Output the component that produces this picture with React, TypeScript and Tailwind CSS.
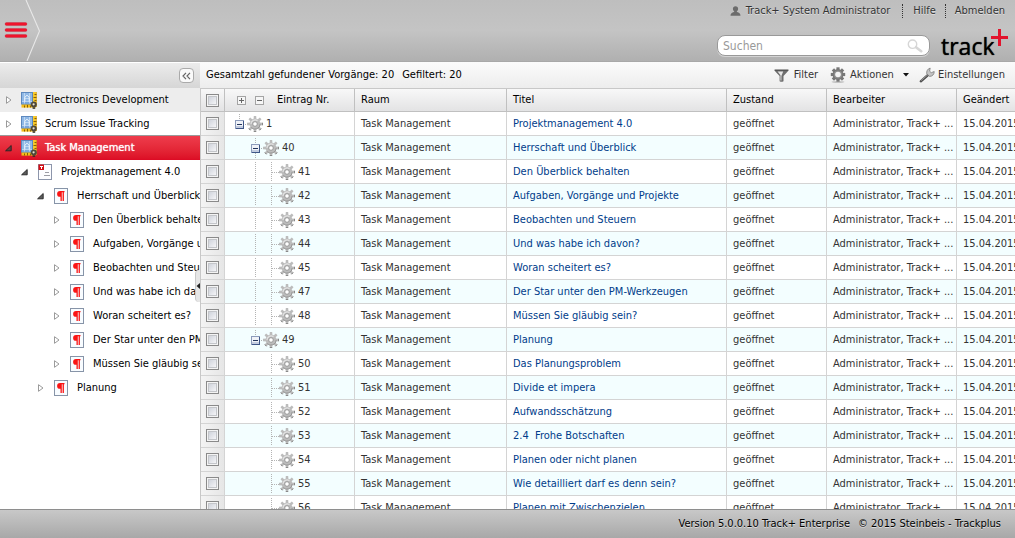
import React from "react";

type TreeNode = {
  label: string;
  depth: number;
  icon: "project" | "document" | "paragraph";
  open?: boolean;
  selected?: boolean;
  hovered?: boolean;
};

const treeNodes: TreeNode[] = [
  { label: "Electronics Development", depth: 0, icon: "project", hovered: true },
  { label: "Scrum Issue Tracking", depth: 0, icon: "project" },
  { label: "Task Management", depth: 0, icon: "project", open: true, selected: true },
  { label: "Projektmanagement 4.0", depth: 1, icon: "document", open: true },
  { label: "Herrschaft und Überblick", depth: 2, icon: "paragraph", open: true },
  { label: "Den Überblick behalten", depth: 3, icon: "paragraph" },
  { label: "Aufgaben, Vorgänge und Projekte", depth: 3, icon: "paragraph" },
  { label: "Beobachten und Steuern", depth: 3, icon: "paragraph" },
  { label: "Und was habe ich davon?", depth: 3, icon: "paragraph" },
  { label: "Woran scheitert es?", depth: 3, icon: "paragraph" },
  { label: "Der Star unter den PM-Werkzeugen", depth: 3, icon: "paragraph" },
  { label: "Müssen Sie gläubig sein?", depth: 3, icon: "paragraph" },
  { label: "Planung", depth: 2, icon: "paragraph" },
];

type GuideKind = "blank" | "line" | "elbow" | "box" | "firstBox" | "lastBox";

type Item = { id: number; title: string; guides: GuideKind[] };

const underFirst: GuideKind[] = ["blank", "line", "elbow"];
const underLast: GuideKind[] = ["blank", "blank", "elbow"];

const items: Item[] = [
  { id: 1, title: "Projektmanagement 4.0", guides: ["firstBox"] },
  { id: 40, title: "Herrschaft und Überblick", guides: ["blank", "box"] },
  { id: 41, title: "Den Überblick behalten", guides: underFirst },
  { id: 42, title: "Aufgaben, Vorgänge und Projekte", guides: underFirst },
  { id: 43, title: "Beobachten und Steuern", guides: underFirst },
  { id: 44, title: "Und was habe ich davon?", guides: underFirst },
  { id: 45, title: "Woran scheitert es?", guides: underFirst },
  { id: 47, title: "Der Star unter den PM-Werkzeugen", guides: underFirst },
  { id: 48, title: "Müssen Sie gläubig sein?", guides: underFirst },
  { id: 49, title: "Planung", guides: ["blank", "lastBox"] },
  { id: 50, title: "Das Planungsproblem", guides: underLast },
  { id: 51, title: "Divide et impera", guides: underLast },
  { id: 52, title: "Aufwandsschätzung", guides: underLast },
  { id: 53, title: "2.4  Frohe Botschaften", guides: underLast },
  { id: 54, title: "Planen oder nicht planen", guides: underLast },
  { id: 55, title: "Wie detailliert darf es denn sein?", guides: underLast },
  { id: 56, title: "Planen mit Zwischenzielen", guides: underLast },
];

const gearTeeth = [0, 45, 90, 135, 180, 225, 270, 315];

function GearIcon() {
  return (
    <svg viewBox="0 0 16 16" className="size-4 shrink-0" aria-hidden="true">
      {gearTeeth.map((a) => (
        <path key={a} d="M6.500 4.500L6.800 0h2.400l.3 4.500z" fill="#bcbcbc" transform={`rotate(${a} 8 8)`} />
      ))}
      {gearTeeth.slice(2, 6).map((a) => (
        <path key={a} d="M6.800 0.400h2.400" stroke="#7e7e7e" strokeWidth="0.9" transform={`rotate(${a} 8 8)`} />
      ))}
      <circle cx="8" cy="8" r="5.400" fill="#bcbcbc" />
      <path d="M13.200 8a5.200 5.200 0 0 1-9 3.500" fill="none" stroke="#929292" strokeWidth="0.9" />
      <path d="M4 8a4 4 0 0 1 6.500-3.100" fill="none" stroke="#e2e2e2" strokeWidth="1.200" />
      <circle cx="8" cy="8" r="2.300" fill="#fff" stroke="#939393" strokeWidth="0.9" />
    </svg>
  );
}

function ActionsIcon() {
  return (
    <svg viewBox="0 0 16 16" className="size-4 shrink-0" aria-hidden="true">
      <ellipse cx="8" cy="15" rx="6.500" ry="0.900" fill="#c4c4c4" />
      {gearTeeth.map((a) => (
        <path key={a} d="M6.400 4V0.300h3.200V4z" fill="#777" transform={`rotate(${a} 8 7.500)`} />
      ))}
      <circle cx="8" cy="7.500" r="5.400" fill="#777" />
      <circle cx="8" cy="7.500" r="4.100" fill="#8e8e8e" />
      <circle cx="8" cy="7.500" r="2.800" fill="#f4f4f4" />
    </svg>
  );
}

function Guide({ kind }: { kind: GuideKind }) {
  const isBox = kind === "box" || kind === "firstBox" || kind === "lastBox";
  const dots = { stroke: "#b4b4b4", strokeWidth: 1, strokeDasharray: "1 1" };
  const drawing = (
    <svg viewBox="0 0 16 23" className="block h-[23px] w-4 shrink-0" aria-hidden="true" shapeRendering="crispEdges">
      {(kind === "line" || kind === "elbow") && <line x1="8.5" y1="2" x2="8.5" y2="21" {...dots} />}
      {kind === "elbow" && <line x1="9" y1="12.5" x2="16" y2="12.5" {...dots} />}
      {isBox && <line x1="8.5" y1="2" x2="8.5" y2="8" {...dots} />}
      {kind === "box" && <line x1="8.5" y1="17" x2="8.5" y2="22" {...dots} />}
      {isBox && (
        <g>
          <rect x="4.5" y="8.5" width="8" height="8" fill="#eff2f8" stroke="#8c9bbb" />
          <path d="M5 14h7v2H5z" fill="#c3cce0" />
          <path d="M4.500 16.500h8v-8" fill="none" stroke="#3f5788" />
          <path d="M6 12h5v1H6z" fill="#22345c" />
          <path d="M14 12h1v1h-1z" fill="#b4b4b4" />
        </g>
      )}
    </svg>
  );
  return isBox ? (
    <button type="button" aria-label="Zuklappen" className="shrink-0">
      {drawing}
    </button>
  ) : (
    drawing
  );
}

function ProjectIcon() {
  return (
    <svg viewBox="0 0 17 17" className="h-[17px] w-[17px]" aria-hidden="true">
      <rect x="11" y="0" width="4.600" height="15" fill="#f7c92a" />
      <path d="M15.300 0v15" stroke="#d39a10" strokeWidth="0.7" />
      <path d="M13.500 2.500h2M12.500 5.500h3M13.500 8.500h2" stroke="#7a5600" strokeWidth="0.9" />
      <rect x="0.500" y="12" width="14" height="3.600" fill="#f3bd1c" />
      <path d="M3.500 13.500v2M6.500 12.800v2.700M9.500 13.500v2" stroke="#7a5600" strokeWidth="0.9" />
      <rect x="0.500" y="0.500" width="11" height="11.500" fill="#8fb8e6" stroke="#5c88be" />
      <path d="M1 9h10v2.500H1z" fill="#7aa7dc" />
      <path d="M3.500 1v10.500M8.500 1v10.500M1 9.500h10M3.500 6.500h5" fill="none" stroke="#c8def5" strokeWidth="0.8" />
      <path d="M3.800 9.500V5.300L6 3.200l2.200 2.100v4.200" fill="none" stroke="#f2f8ff" strokeWidth="0.9" />
      <circle cx="12.800" cy="12.600" r="3" fill="#4f483b" />
      <circle cx="12.600" cy="12.300" r="1.100" fill="#e9e2cf" />
      <path d="M11.600 15.400h2.600v1.400h-2.600z" fill="#2e2a22" />
    </svg>
  );
}

function DocumentIcon() {
  return (
    <svg viewBox="0 0 14 16" className="h-4 w-3.5" aria-hidden="true">
      <rect x="0.5" y="0.5" width="13" height="15" fill="#fdfdff" stroke="#8d96ab" />
      <path d="M0.500 0.500h5.500v5.500h-5.500z" fill="#d40d14" />
      <path d="M2 2h3v1H4v2H3V3H2z" fill="#fff" />
      <path d="M7 8.500h4M6 11.500h6" stroke="#9c9ca4" />
    </svg>
  );
}

function ParagraphIcon() {
  return (
    <svg viewBox="0 0 14 16" className="h-4 w-3.5" aria-hidden="true">
      <rect x="0.5" y="0.5" width="13" height="15" fill="#f8fcff" stroke="#8794a8" />
      <path d="M10.500 3H6a2.900 2.900 0 0 0 0 5.800h.5V13h1.300V4.200h.8V13h1.300V4.200h.6z" fill="#fa1414" />
    </svg>
  );
}

function Arrow({ open, selected }: { open?: boolean; selected?: boolean }) {
  return (
    <svg viewBox="0 0 8 8" className="size-2" aria-hidden="true">
      {open ? (
        <path d="M7.200 1.500v5.300H1.600z" fill={selected ? "#6d3a3e" : "#5c5c5c"} stroke="#222" strokeWidth="0.9" />
      ) : (
        <path d="M2.500 0.700v6.600L7 4z" fill="#fff" stroke="#909090" strokeWidth="0.9" />
      )}
    </svg>
  );
}

const indent = ["pl-1", "pl-5", "pl-9", "pl-[52px]"];

function TreeRow({ node }: { node: TreeNode }) {
  const tone = node.selected
    ? "bg-linear-to-b from-[#ee3c4c] to-[#dc0a24] text-white shadow-[0_-1px_0_#9a9a9a] [text-shadow:0_0_1px_#fff]"
    : node.hovered
      ? "bg-[#ededed] text-black"
      : "text-black";
  return (
    <li className={`flex h-6 items-center whitespace-nowrap ${indent[node.depth]} ${tone}`}>
      <button type="button" aria-label={node.open ? "Zuklappen" : "Aufklappen"} className="flex w-4 shrink-0 items-center">
        <Arrow open={node.open} selected={node.selected} />
      </button>
      <a href="#" className="flex items-center">
        <span className="mr-[7px] flex w-[18px] shrink-0 justify-center">
          {node.icon === "project" && <ProjectIcon />}
          {node.icon === "document" && <DocumentIcon />}
          {node.icon === "paragraph" && <ParagraphIcon />}
        </span>
        {node.label}
      </a>
    </li>
  );
}

function CheckBox({ label }: { label: string }) {
  return (
    <input
      type="checkbox"
      aria-label={label}
      className="block size-[13px] appearance-none border border-[#8a8a8a] bg-linear-to-br from-[#c6cad4] to-white shadow-[inset_0_0_0_1px_#f4f4f4,inset_0_0_0_2px_#c4c6ca] checked:bg-[#888]"
    />
  );
}

function HeadToggle({ plus, label }: { plus?: boolean; label: string }) {
  return (
    <button type="button" aria-label={label}>
      <svg viewBox="0 0 9 9" className="block size-[9px]" shapeRendering="crispEdges" aria-hidden="true">
        <rect x="0.5" y="0.5" width="8" height="8" fill="#f6f6f6" stroke="#a4a4a4" />
        <path d={plus ? "M2 4.500h5M4.500 2v5" : "M2 4.500h5"} stroke="#666" />
      </svg>
    </button>
  );
}

const th = "h-[23px] border-r border-b border-[#c0c0c0] bg-linear-to-b from-[#f8f8f8] to-[#e3e3e4] px-1.5 py-0 text-left font-normal text-black";
const td = "h-6 overflow-hidden border-r border-b border-[#d4d4d4] px-1.5 py-0";

export default function App() {
  return (
    <div className="flex h-screen flex-col overflow-hidden bg-white font-['DejaVu_Sans_Condensed','DejaVu_Sans',sans-serif] text-[11px] leading-4 text-[#333]">
      <header className="flex h-[62px] shrink-0 justify-between border-b border-[#a8a8a8] bg-linear-to-b from-[#bebebe] via-[#c4c4c4] to-[#b0b0b0]">
        <button type="button" aria-label="Menü" className="flex w-[41px]">
          <svg viewBox="0 0 41 61" className="h-[61px] w-[41px]" aria-hidden="true">
            <path d="M26 0l13.500 31L27 61" fill="none" stroke="#e8e8e8" strokeWidth="1.100" />
            <path d="M6.500 24h19M6.500 30h19M6.500 36h19" stroke="#c9485a" strokeWidth="3.600" strokeLinecap="round" />
            <path d="M6.500 24h19M6.500 30h19M6.500 36h19" stroke="#f0142c" strokeWidth="2.600" strokeLinecap="round" />
          </svg>
        </button>
        <div className="flex flex-col items-end">
          <nav className="flex h-[22px] items-center pr-2.5 [text-shadow:0_1px_0_#dedede]">
            <a href="#" className="flex items-center gap-[5px]">
              <svg viewBox="0 0 11 10" className="h-2.5 w-[11px]" aria-hidden="true">
                <circle cx="5.500" cy="2.800" r="2.600" fill="#6c6c6c" />
                <path d="M0.500 9.800c0-2.400 1.500-3.200 3.400-3.800l.5-1h2.200l.5 1c1.900.6 3.400 1.400 3.400 3.800z" fill="#6c6c6c" />
              </svg>
              Track+ System Administrator
            </a>
            <span className="mr-2.5 ml-3 h-3.5 border-l border-dotted border-[#333]" />
            <a href="#">Hilfe</a>
            <span className="mx-[9px] h-3.5 border-l border-dotted border-[#333]" />
            <a href="#">Abmelden</a>
          </nav>
          <div className="flex items-center gap-[11px] pt-[13px] pr-[7px]">
            <label className="flex h-[21px] w-[213px] items-center rounded-lg border border-[#999] bg-white pr-1.5 pl-[5px] shadow-[0_1px_0_#d4d4d4]">
              <input type="text" placeholder="Suchen" aria-label="Suchen" className="min-w-0 flex-1 bg-transparent text-xs outline-none placeholder:text-[#999]" />
              <svg viewBox="0 0 16 14" className="h-3.5 w-4" fill="none" stroke="#d6d6d6" aria-hidden="true">
                <circle cx="5.500" cy="5.200" r="4.200" strokeWidth="1.400" />
                <path d="M9 8.200l5.200 4" strokeWidth="2.600" strokeLinecap="round" />
              </svg>
            </label>
            <div className="relative flex h-[21px] w-[67px] items-center">
              <span className="font-['Open_Sans',sans-serif] text-[23px] leading-6 font-medium text-black [text-shadow:0_0_1px_#000]">track</span>
              <svg viewBox="0 0 17 17" className="absolute -top-1.5 right-0 size-[17px]" aria-hidden="true">
                <path d="M8.500 0v17M0 8.500h17" stroke="#e2142d" strokeWidth="3" />
              </svg>
            </div>
          </div>
        </div>
      </header>

      <main className="flex min-h-0 flex-1">
        <aside className="relative flex w-[200px] shrink-0 flex-col bg-white">
          <div className="flex h-[26px] shrink-0 items-center justify-end border-t border-white bg-linear-to-b from-[#ececec] to-[#d6d6d6] pr-1.5">
            <button type="button" aria-label="Baum einklappen" className="flex size-[15px] items-center justify-center rounded-sm border border-[#aaa] bg-[#fafafa]">
              <svg viewBox="0 0 9 8" className="h-2 w-[9px]" fill="none" stroke="#666" strokeWidth="1.200" aria-hidden="true">
                <path d="M4 0.800L1 4l3 3.200M8 0.800L5 4l3 3.200" />
              </svg>
            </button>
          </div>
          <ul className="min-h-0 flex-1 overflow-hidden">
            {treeNodes.map((node) => (
              <TreeRow key={node.label} node={node} />
            ))}
          </ul>
          <button type="button" aria-label="Trennleiste" className="absolute top-[208px] right-0 flex h-8 w-[5px] items-center justify-center rounded-l-sm border-l border-[#c8c8c8] bg-[#e6e6e6]">
            <svg viewBox="0 0 4 6" className="h-1.5 w-1" aria-hidden="true">
              <path d="M4 0v6L0.500 3z" fill="#222" />
            </svg>
          </button>
        </aside>

        <section className="flex min-w-0 flex-1 flex-col">
          <div className="flex h-[27px] shrink-0 items-center justify-between border-b border-[#c8c8c8] bg-linear-to-b from-[#fbfbfb] to-[#ededed] pr-2.5 pl-1.5">
            <div className="flex gap-2 text-black">
              <span>Gesamtzahl gefundener Vorgänge: 20</span>
              <span>Gefiltert: 20</span>
            </div>
            <div className="flex items-center">
              <button type="button" className="flex items-center gap-[5px]">
                <svg viewBox="0 0 15 13" className="h-[13px] w-[15px]" aria-hidden="true">
                  <path d="M0.500 1h14l-.8 1.600L9.500 7v5.200l-1 .6H6.600l-1-.6V7L1.300 2.600z" fill="#6e6e6e" />
                  <path d="M3.600 2.600h5.600L7.400 7v4.600h-.9V6.300z" fill="#e6e6e6" />
                  <path d="M0.600 1.100h13.800" stroke="#4e4e4e" strokeWidth="1.200" />
                </svg>
                Filter
              </button>
              <button type="button" className="ml-3 flex items-center gap-1">
                <ActionsIcon />
                Aktionen
                <svg viewBox="0 0 6 4" className="ml-[5px] h-1 w-1.5" aria-hidden="true">
                  <path d="M0 0h6L3 3.600z" fill="#111" />
                </svg>
              </button>
              <button type="button" className="ml-2.5 flex items-center gap-[3px]">
                <svg viewBox="0 0 16 16" className="size-4" aria-hidden="true">
                  <path d="M1.800 14.300L9 8" stroke="#4e4e4e" strokeWidth="2.400" strokeLinecap="round" />
                  <path d="M2.200 13.500L9 7.600" stroke="#a8a8a8" strokeWidth="0.800" strokeLinecap="round" />
                  <path d="M7.800 6.900c-.6-2.600.8-5.200 3.400-5.800l-.6 3.100 1.700 1.500 2.900-1.200c.2 2.600-1.800 5-4.600 4.900z" fill="#c4c4c4" stroke="#707070" strokeWidth="0.700" />
                </svg>
                Einstellungen
              </button>
            </div>
          </div>
          <div className="min-h-0 flex-1 overflow-hidden">
            <table className="w-full min-w-[858px] table-fixed border-separate border-spacing-0 border-l border-[#c8c8c8]">
              <colgroup>
                <col className="w-6" />
                <col className="w-[130px]" />
                <col className="w-[152px]" />
                <col className="w-[220px]" />
                <col className="w-[100px]" />
                <col className="w-[130px]" />
                <col />
              </colgroup>
              <thead>
                <tr>
                  <th className={`${th} pl-[5px]`}>
                    <CheckBox label="Alle auswählen" />
                  </th>
                  <th className={th}>
                    <div className="flex items-center pl-1.5">
                      <span className="flex gap-[9px] pr-[13px]">
                        <HeadToggle plus label="Alle aufklappen" />
                        <HeadToggle label="Alle zuklappen" />
                      </span>
                      Eintrag Nr.
                    </div>
                  </th>
                  <th className={th}>Raum</th>
                  <th className={th}>Titel</th>
                  <th className={th}>Zustand</th>
                  <th className={th}>Bearbeiter</th>
                  <th className={th}>Geändert</th>
                </tr>
              </thead>
              <tbody className="whitespace-nowrap">
                {items.map((item) => (
                  <tr key={item.id} className="odd:bg-white even:bg-[#f3feff]">
                    <td className={`${td} bg-linear-to-r from-[#f4f4f4] to-[#e6e6e6] pl-[5px]`}>
                      <CheckBox label={`Vorgang ${item.id} auswählen`} />
                    </td>
                    <td className="h-6 border-r border-b border-[#d4d4d4] p-0 pl-1.5">
                      <div className="flex h-[23px] items-center">
                        {item.guides.map((kind, i) => (
                          <Guide key={i} kind={kind} />
                        ))}
                        <GearIcon />
                        <span className="pl-[3px]">{item.id}</span>
                      </div>
                    </td>
                    <td className={td}>Task Management</td>
                    <td className={`${td} whitespace-pre`}>
                      <a href="#" className="text-[#003c8a]">{item.title}</a>
                    </td>
                    <td className={td}>geöffnet</td>
                    <td className={td}>Administrator, Track+ ...</td>
                    <td className={td}>15.04.2015</td>
                  </tr>
                ))}
              </tbody>
            </table>
          </div>
        </section>
      </main>

      <footer className="flex h-[29px] shrink-0 items-center justify-end gap-2 border-t border-[#8e8e8e] bg-linear-to-b from-[#c8c8c8] to-[#a8a8a8] pr-3.5 text-black [text-shadow:0_1px_0_#dedede]">
        <span>Version 5.0.0.10 Track+ Enterprise</span>
        <span>© 2015 Steinbeis - Trackplus</span>
      </footer>
    </div>
  );
}
